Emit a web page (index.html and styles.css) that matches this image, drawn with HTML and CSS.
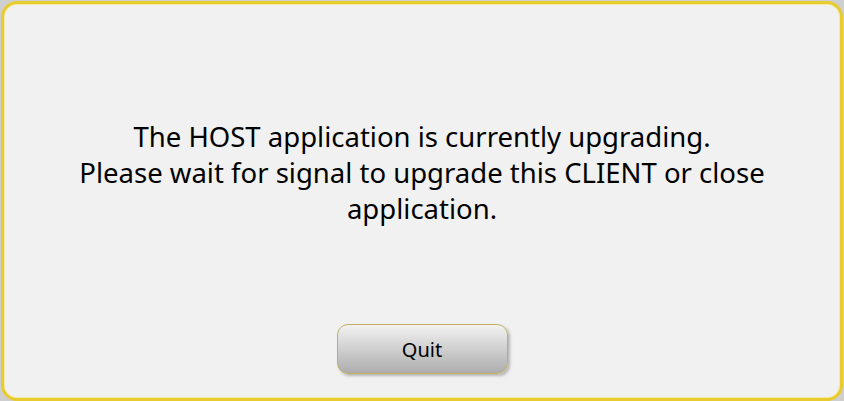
FILE: index.html
```html
<!DOCTYPE html>
<html lang="en">
<head>
    <meta charset="UTF-8">
    <title>Upgrade</title>
    <link rel="stylesheet" href="styles.css">
</head>
<body>
    <div class="dialog">
        <div class="message">
            The HOST application is currently upgrading.<br>
            Please wait for signal to upgrade this CLIENT or close<br>
            application.
        </div>
        <div class="actions">
            <button class="quit">Quit</button>
        </div>
    </div>
</body>
</html>
```

FILE: styles.css
```css
html {
    background-color: #cfcfcf;
}
body {
    margin: 0;
    font-family: "Noto Sans", "Open Sans", sans-serif;
    color: #000;
}
.dialog {
    box-sizing: border-box;
    height: 400px;
    margin: 1px 1px 0 1px;
    border: 3px solid #e8cb2c;
    border-radius: 16px;
    background-color: #f1f1f1;
    box-shadow: inset 0 0 0 1px #f3e9a8;
    display: flex;
    flex-direction: column;
    align-items: center;
}
.message {
    padding-top: 115px;
    font-size: 27.5px;
    line-height: 36px;
    text-align: center;
}
.actions {
    margin-top: auto;
    margin-bottom: 24px;
}
.quit {
    width: 171px;
    height: 50px;
    font-family: inherit;
    font-size: 20px;
    color: #000;
    border: 1px solid #c2b060;
    border-radius: 11px;
    background: linear-gradient(#f2f2f2, #adadad);
    box-shadow: 2px 2px 3px rgba(0, 0, 0, 0.25);
    cursor: pointer;
}
```
